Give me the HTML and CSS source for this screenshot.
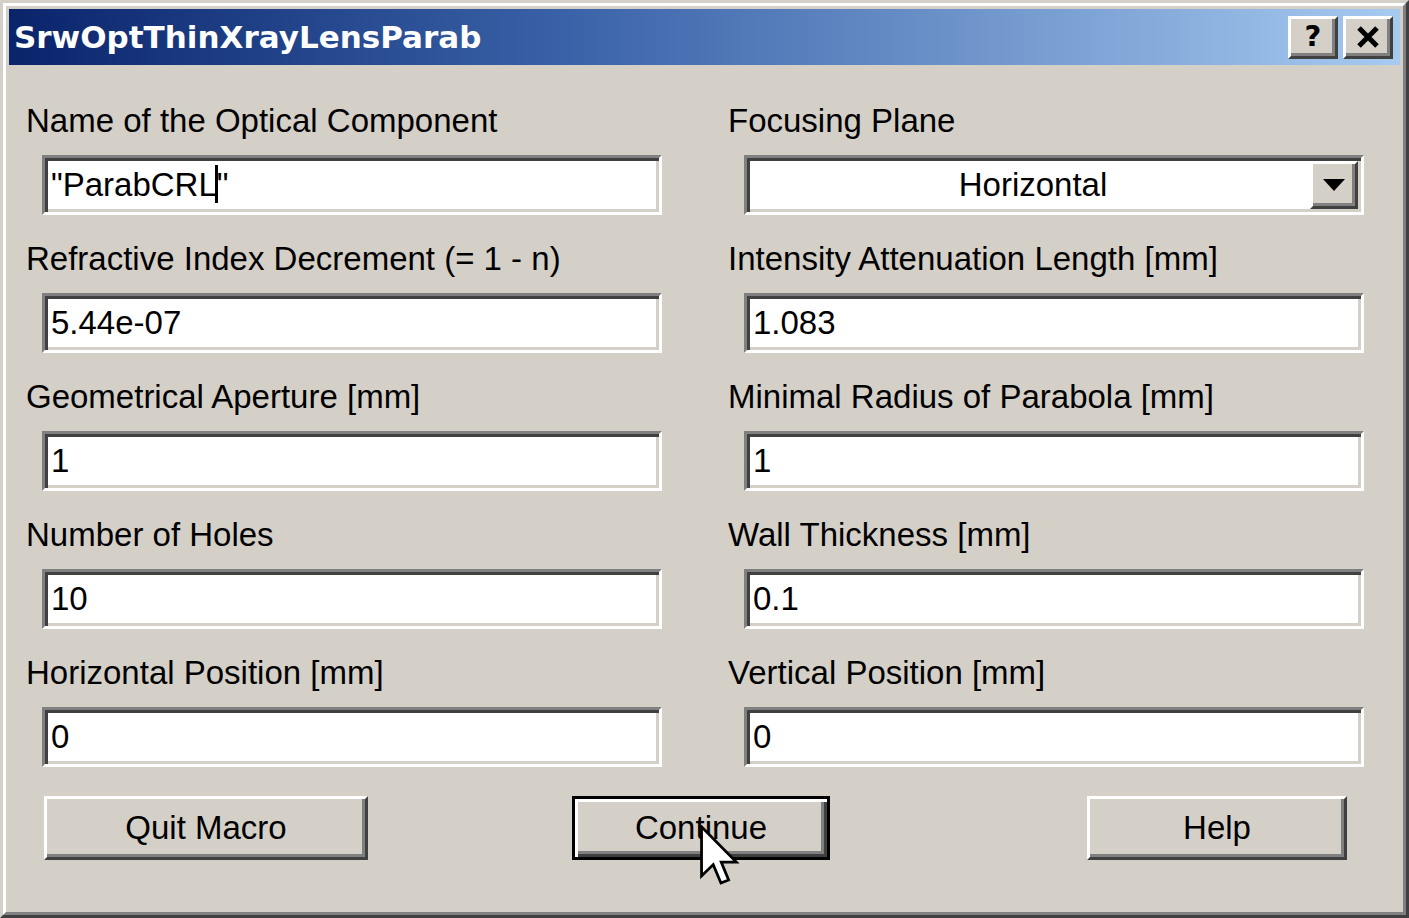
FILE: index.html
```html
<!DOCTYPE html>
<html>
<head>
<meta charset="utf-8">
<link rel="stylesheet" href="styles.css">
</head>
<body>
<div class="window">
  <div class="frame">
    <div class="titlebar">
      <span class="title">SrwOptThinXrayLensParab</span>
      <div class="tbtns">
        <div class="tbtn help-q">?</div>
        <div class="tbtn">
          <svg width="24" height="22" viewBox="0 0 24 22"><path d="M3 2 L21 20 M21 2 L3 20" stroke="#000" stroke-width="5" fill="none"/></svg>
        </div>
      </div>
    </div>
    <div class="content">
      <div class="grid">
        <div class="cell">
          <div class="label">Name of the Optical Component</div>
          <div class="field">"ParabCRL<span class="caret"></span>"</div>
        </div>
        <div class="cell">
          <div class="label">Focusing Plane</div>
          <div class="field combo">
            <span class="combo-text">Horizontal</span>
            <span class="drop"><svg width="22" height="12" viewBox="0 0 22 12"><path d="M0 0 H22 L11 12 Z" fill="#000"/></svg></span>
          </div>
        </div>
        <div class="cell">
          <div class="label">Refractive Index Decrement (= 1 - n)</div>
          <div class="field">5.44e-07</div>
        </div>
        <div class="cell">
          <div class="label">Intensity Attenuation Length [mm]</div>
          <div class="field">1.083</div>
        </div>
        <div class="cell">
          <div class="label">Geometrical Aperture [mm]</div>
          <div class="field">1</div>
        </div>
        <div class="cell">
          <div class="label">Minimal Radius of Parabola [mm]</div>
          <div class="field">1</div>
        </div>
        <div class="cell">
          <div class="label">Number of Holes</div>
          <div class="field">10</div>
        </div>
        <div class="cell">
          <div class="label">Wall Thickness [mm]</div>
          <div class="field">0.1</div>
        </div>
        <div class="cell">
          <div class="label">Horizontal Position [mm]</div>
          <div class="field">0</div>
        </div>
        <div class="cell">
          <div class="label">Vertical Position [mm]</div>
          <div class="field">0</div>
        </div>
      </div>
      <div class="buttons">
        <div class="btn btn-quit">Quit Macro</div>
        <div class="btn btn-default btn-continue">Continue</div>
        <div class="btn btn-help">Help</div>
      </div>
    </div>
  </div>
  <svg class="cursor" width="40" height="62" viewBox="0 0 13 20">
    <path d="M0.5 0.5 L0.5 16.5 L4.3 12.8 L6.8 18.8 L9.3 17.8 L6.9 12 L11.8 12 Z" fill="#fff" stroke="#000" stroke-width="0.9" stroke-linejoin="miter"/>
  </svg>
</div>
</body>
</html>
```

FILE: styles.css
```css
html, body {
  margin: 0;
  padding: 0;
  background: #d4d0c8;
}

.window {
  position: relative;
  width: 1409px;
  height: 918px;
  box-sizing: border-box;
  border: 3px solid;
  border-color: #d4d0c8 #404040 #404040 #d4d0c8;
  background: #d4d0c8;
  font-family: "Liberation Sans", Arial, sans-serif;
  color: #000;
}

.frame {
  height: 100%;
  box-sizing: border-box;
  border: 3px solid;
  border-color: #ffffff #808080 #808080 #ffffff;
  padding: 3px;
}

.titlebar {
  height: 56px;
  display: flex;
  align-items: center;
  justify-content: space-between;
  padding: 0 7px 0 5px;
  background: linear-gradient(to right, #0a246a 0%, #3a62a8 40%, #a6caf0 100%);
}

.title {
  font-family: "DejaVu Sans", Verdana, sans-serif;
  font-weight: bold;
  font-size: 31px;
  color: #fff;
}

.tbtns {
  display: flex;
  gap: 5px;
}

.tbtn {
  width: 50px;
  height: 43px;
  box-sizing: border-box;
  border: 3px solid;
  border-color: #fff #404040 #404040 #fff;
  box-shadow: inset -3px -3px 0 #808080;
  background: #d4d0c8;
  display: flex;
  align-items: center;
  justify-content: center;
}

.help-q {
  font-family: "DejaVu Sans", Verdana, sans-serif;
  font-weight: bold;
  font-size: 29px;
  line-height: 1;
  padding-bottom: 2px;
}

.content {
  padding: 36px 0 0 17px;
}

.grid {
  display: grid;
  grid-template-columns: 636px 636px;
  column-gap: 66px;
  row-gap: 24px;
}

.label {
  font-size: 33px;
  line-height: 40px;
  height: 40px;
  white-space: nowrap;
  margin-bottom: 14px;
}

.field {
  margin-left: 16px;
  width: 620px;
  height: 60px;
  box-sizing: border-box;
  border: 3px solid;
  border-color: #808080 #fff #fff #808080;
  box-shadow: inset 3px 3px 0 #404040, inset -3px -3px 0 #d4d0c8;
  background: #fff;
  font-size: 33px;
  line-height: 54px;
  padding-left: 6px;
  white-space: nowrap;
}

.caret {
  display: inline-block;
  width: 3px;
  height: 38px;
  background: #000;
  vertical-align: -7px;
  margin: 0 -1px 0 -2px;
}

.combo {
  display: flex;
  padding: 3px;
  line-height: 48px;
}

.combo-text {
  flex: 1;
  text-align: center;
  padding-left: 6px;
}

.drop {
  width: 48px;
  height: 48px;
  box-sizing: border-box;
  border: 3px solid;
  border-color: #fff #404040 #404040 #fff;
  box-shadow: inset -3px -3px 0 #808080;
  background: #d4d0c8;
  display: flex;
  align-items: center;
  justify-content: center;
}

.buttons {
  display: flex;
  margin-top: 29px;
}

.btn {
  height: 64px;
  box-sizing: border-box;
  border: 3px solid;
  border-color: #fff #404040 #404040 #fff;
  box-shadow: inset -3px -3px 0 #808080;
  background: #d4d0c8;
  font-size: 33px;
  display: flex;
  align-items: center;
  justify-content: center;
  padding-bottom: 1px;
}

.btn-default {
  border-color: #000;
  box-shadow: inset 3px 3px 0 #fff, inset -3px -3px 0 #404040, inset -6px -6px 0 #808080;
}

.btn-quit {
  width: 324px;
  margin-left: 18px;
}

.btn-continue {
  width: 258px;
  margin-left: 204px;
}

.btn-help {
  width: 260px;
  margin-left: 257px;
}

.cursor {
  position: absolute;
  left: 697px;
  top: 822px;
}
```
